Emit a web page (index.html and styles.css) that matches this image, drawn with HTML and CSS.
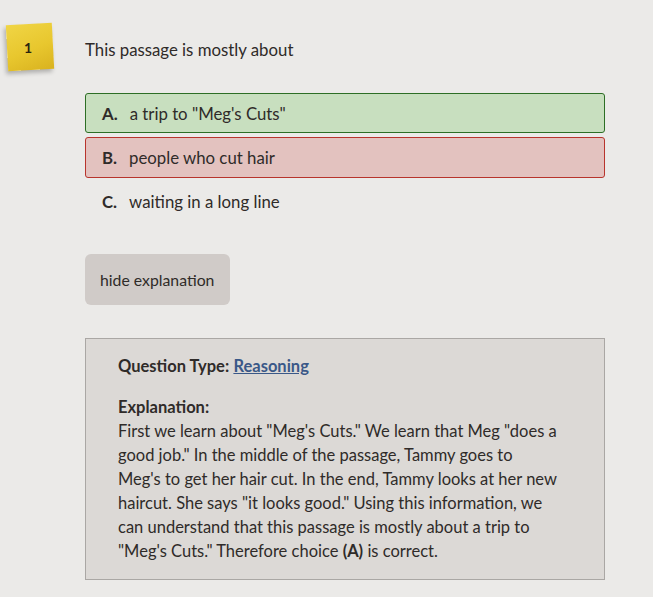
FILE: index.html
```html
<!DOCTYPE html>
<html>
<head>
<meta charset="utf-8">
<link rel="stylesheet" href="styles.css">
</head>
<body>
<div class="page">
  <div class="note"><span>1</span></div>
  <div class="content">
    <p class="question">This passage is mostly about</p>
    <ul class="options">
      <li class="option correct"><b>A.</b><span>a trip to "Meg's Cuts"</span></li>
      <li class="option wrong"><b>B.</b><span>people who cut hair</span></li>
      <li class="option plain"><b>C.</b><span>waiting in a long line</span></li>
    </ul>
    <button class="toggle">hide explanation</button>
    <div class="explain">
      <p class="qtype"><b>Question Type:</b> <a href="#">Reasoning</a></p>
      <p class="body"><b>Explanation:</b><br>First we learn about "Meg's Cuts." We learn that Meg "does a<br>good job." In the middle of the passage, Tammy goes to<br>Meg's to get her hair cut. In the end, Tammy looks at her new<br>haircut. She says "it looks good." Using this information, we<br>can understand that this passage is mostly about a trip to<br>"Meg's Cuts." Therefore choice <b>(A)</b> is correct.</p>
    </div>
  </div>
</div>
</body>
</html>
```
FILE: styles.css
```css
html, body {
  margin: 0;
  padding: 0;
  background: #ebeae8;
}
body {
  font-family: Lato, "Open Sans", sans-serif;
  color: #2f2b29;
  width: 653px;
  height: 597px;
  overflow: hidden;
}
.page {
  display: flex;
  align-items: flex-start;
  padding: 24px 0 0 7px;
}
.note {
  width: 46px;
  height: 46px;
  flex: none;
  background: linear-gradient(160deg, #f0d545 0%, #e8c72e 55%, #d9b21f 100%);
  transform: rotate(-3deg);
  box-shadow: -2px 3px 4px rgba(0,0,0,0.25);
  display: flex;
  align-items: center;
  justify-content: center;
  font-weight: 700;
  font-size: 14px;
  color: #2a2410;
}
.note span { transform: rotate(3deg); margin-right: 3px; }
.content {
  width: 520px;
  margin-left: 32px;
}
.question {
  margin: 16px 0 0;
  font-size: 16.8px;
  line-height: 20px;
}
.options {
  list-style: none;
  margin: 33px 0 0;
  padding: 0;
  display: flex;
  flex-direction: column;
  gap: 4px;
}
.option {
  height: 40px;
  box-sizing: border-box;
  display: flex;
  align-items: center;
  gap: 12px;
  padding: 0 16px;
  border: 1px solid transparent;
  border-radius: 3px;
  font-size: 16.8px;
}
.option b { font-weight: 700; }
.correct {
  background: #c8dfbf;
  border-color: #2d6e25;
}
.wrong {
  height: 41px;
  background: #e3c2bf;
  border-color: #b8342c;
}
.plain { height: 38px; }
.toggle {
  display: block;
  margin-top: 34px;
  width: 145px;
  height: 51px;
  border: none;
  border-radius: 6px;
  background: #d0cbc8;
  font-family: inherit;
  font-size: 15.8px;
  color: #2f2b29;
  padding: 0 0 0 15px;
  text-align: left;
}
.explain {
  margin-top: 33px;
  height: 242px;
  box-sizing: border-box;
  background: #dcd9d6;
  border: 1px solid #aaa7a4;
  padding: 15px 20px 16px 32px;
  font-size: 16.5px;
  line-height: 24px;
}
.explain p { margin: 0; }
.qtype { margin-bottom: 17px !important; }
.explain a {
  color: #3a5888;
  font-weight: 700;
  text-decoration: underline;
}
```
